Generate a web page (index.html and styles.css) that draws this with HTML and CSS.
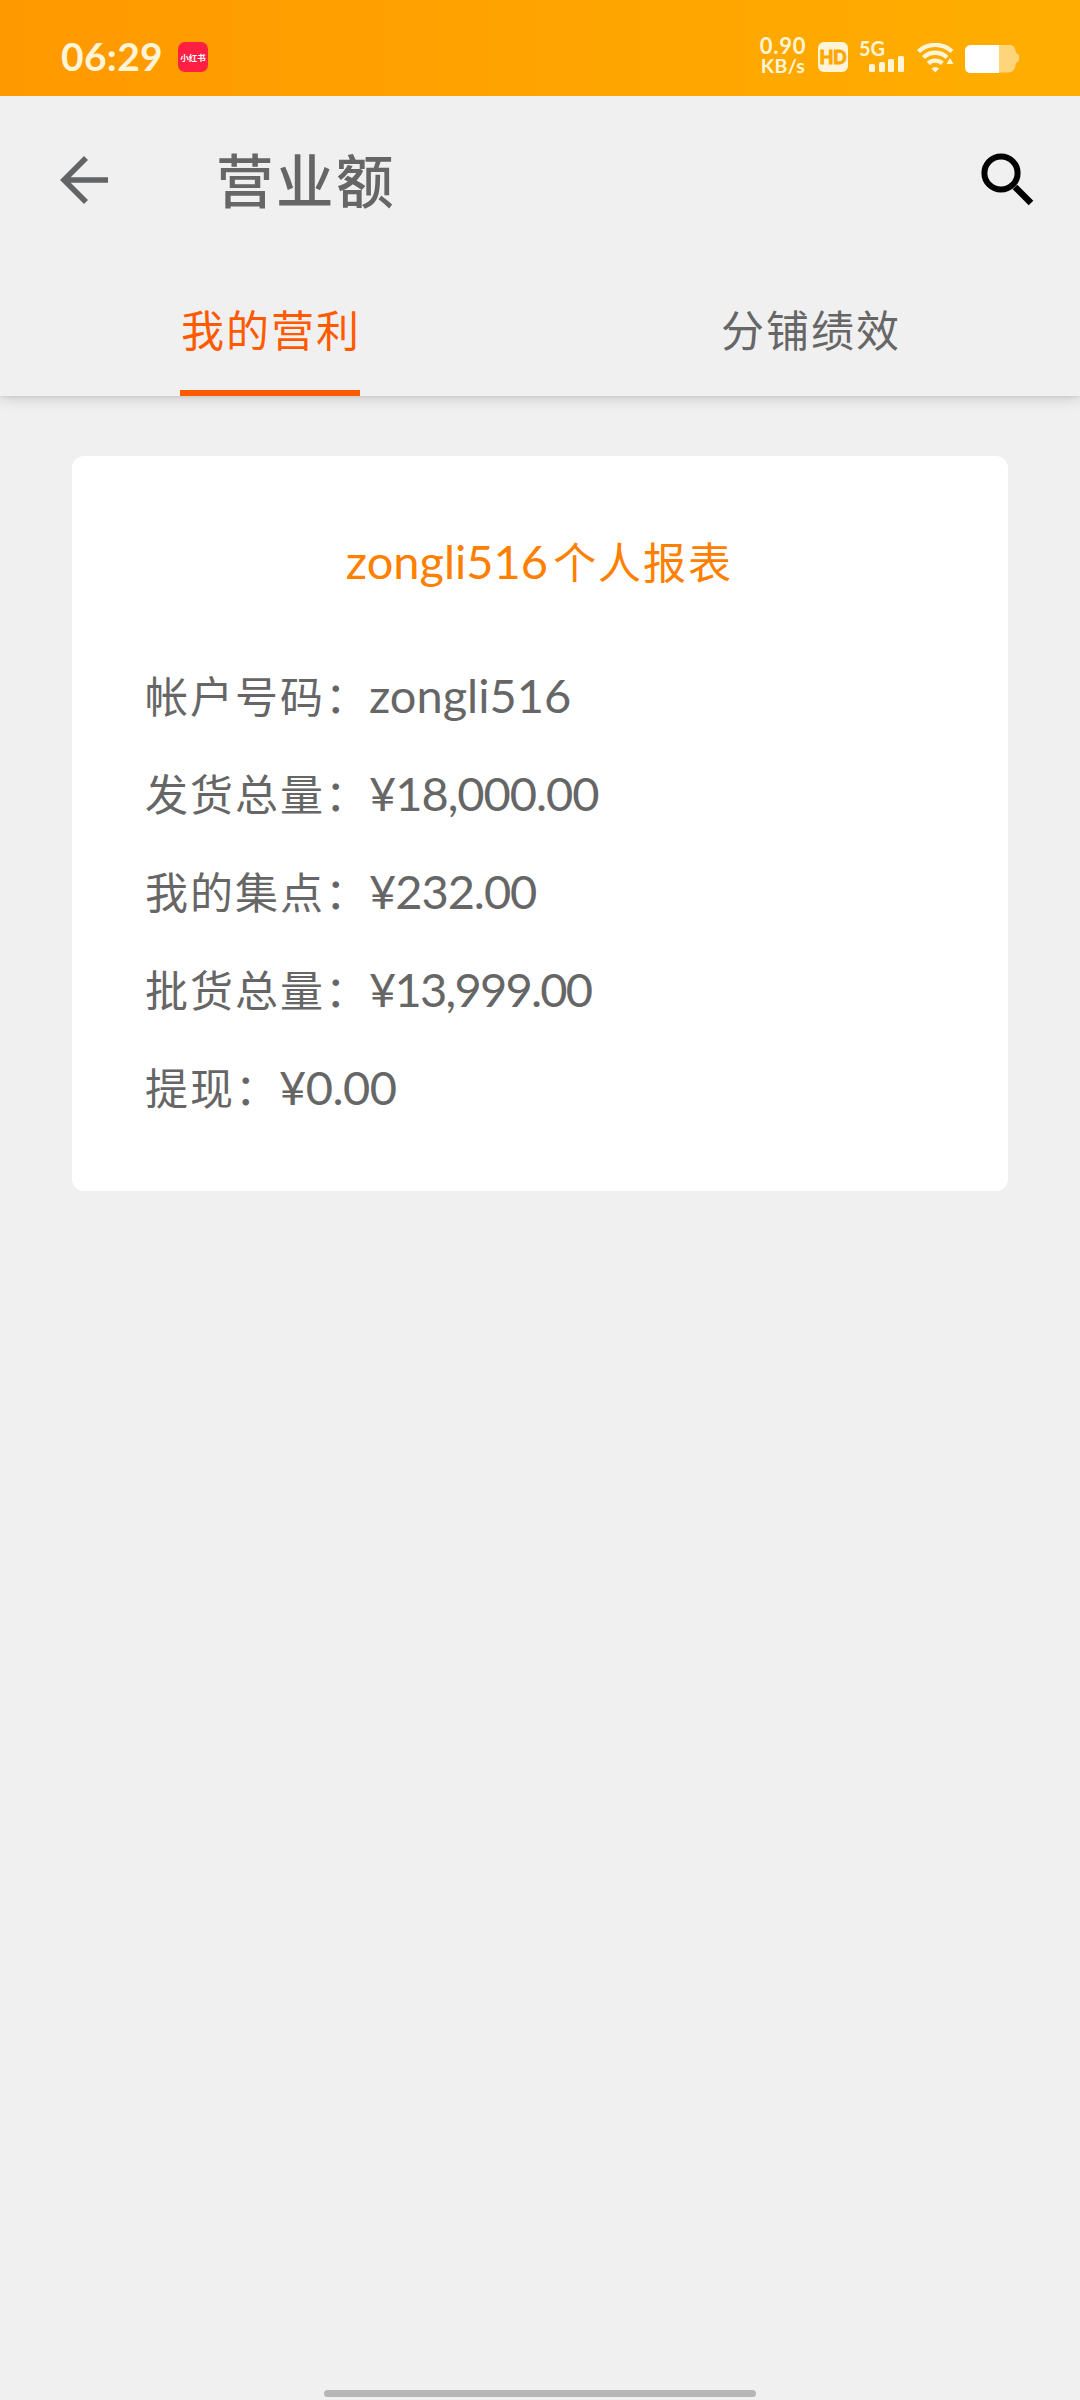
FILE: index.html
```html
<!DOCTYPE html>
<html lang="zh-CN">
<head>
<meta charset="utf-8">
<title>营业额</title>
<link rel="stylesheet" href="styles.css">
</head>
<body>
<header class="status">
  <span class="clock">06:29</span>
  <span class="app-badge">小红书</span>
  <div class="status-right">
    <div class="speed"><span class="speed-value">0.90</span><span class="speed-unit">KB/s</span></div>
    <span class="hd">HD</span>
    <div class="signal">
      <span class="network">5G</span>
      <svg class="bars" width="35" height="16" viewBox="0 0 35 16"><rect x="0" y="8" width="6" height="8" rx="1.5"/><rect x="10" y="6" width="6" height="10" rx="1.5"/><rect x="19" y="3" width="6" height="13" rx="1.5"/><rect x="29" y="0" width="6" height="16" rx="1.5"/></svg>
    </div>
    <svg class="wifi" width="37" height="30" viewBox="0 0 37 30" fill="none"><path d="M1.500 8.500a24.500 24.500 0 0 1 33.500 0M6.500 14.500a17 17 0 0 1 23.500 0" stroke="#fff5d6" stroke-width="4.400"/><path d="M11.300 20.300a10.500 10.500 0 0 1 14 0" stroke="#fff5d6" stroke-width="4.400"/><path d="M14.500 25.500q3.800-3 7.600 0l-3.800 4z" fill="#fff5d6"/><path d="M33 15l3.500 6h-7z" fill="#fff5d6"/></svg>
    <svg class="battery" width="54" height="28" viewBox="0 0 54 28"><path d="M34 0h11q5 0 6 8q3 1 3 3v4q0 2-3 3q-1 9-7 9.500H34z" fill="#ffd57c"/><path d="M34 0H6Q0 0 0 6v16q0 6 6 6h28z" fill="#fff"/></svg>
  </div>
</header>
<div class="appbar">
  <div class="toolbar">
    <svg class="back" width="48" height="48" viewBox="0 0 48 48" fill="none" stroke="#636466" stroke-width="5.600"><path d="M48 24H4M26 2L4 24l22 22"/></svg>
    <h1 class="title">营业额</h1>
    <svg class="search" width="54" height="54" viewBox="0 0 54 54" fill="none" stroke="#000"><circle cx="20" cy="20" r="16.600" stroke-width="6"/><path d="M34 34l16 16" stroke-width="6.500"/></svg>
  </div>
  <nav class="tabs">
    <div class="tab"><span class="tab-label tab-active">我的营利</span></div>
    <div class="tab"><span class="tab-label">分铺绩效</span></div>
  </nav>
</div>
<main class="content">
  <section class="card">
    <h2 class="report"><span class="value name">zongli516</span>个人报表</h2>
    <p class="row">帐户号码：<span class="value name">zongli516</span></p>
    <p class="row">发货总量：<span class="value snug">¥18,000.00</span></p>
    <p class="row">我的集点：<span class="value snug">¥232.00</span></p>
    <p class="row">批货总量：<span class="value tight">¥13,999.00</span></p>
    <p class="row">提现：<span class="value">¥0.00</span></p>
  </section>
</main>
<div class="home-bar"></div>
</body>
</html>
```
FILE: styles.css
```css
* { box-sizing: border-box; margin: 0; padding: 0; }
body {
  width: 1080px; height: 2400px;
  display: flex; flex-direction: column;
  background: #f0f0f0; color: #666;
  font-family: "Noto Sans CJK SC", sans-serif;
  overflow: hidden;
}
svg { display: block; flex: none; }
.status {
  height: 96px; flex: none;
  display: flex; align-items: flex-start;
  padding: 0 61px 0 61px;
  background: linear-gradient(90deg, #ff9900, #ffae00);
  color: #fff5d6;
  font-family: Lato, sans-serif; font-weight: 700;
}
.clock { width: 117px; margin-top: 32px; font-size: 39px; line-height: 48px; letter-spacing: .3px; white-space: nowrap; }
.app-badge {
  width: 30px; height: 30px; margin-top: 42px; border-radius: 7px;
  background: #ff1f43; color: #fff;
  font: 700 8.500px/30px "Noto Sans CJK SC", sans-serif;
  text-align: center; white-space: nowrap;
}
.status-right { display: flex; margin-left: auto; }
.speed { display: flex; flex-direction: column; align-items: center; width: 48px; margin-top: 35px; }
.speed-value { font-size: 22px; line-height: 22px; letter-spacing: .8px; }
.speed-unit { font-size: 19.500px; line-height: 20px; margin-top: -1px; letter-spacing: .3px; }
.hd { width: 30px; height: 30px; margin: 42px 0 0 11px; border-radius: 6px; background: #fff5d6; color: #ffa600; font-size: 18px; line-height: 30px; font-weight: 900; text-align: center; letter-spacing: -.3px; -webkit-text-stroke: .8px #ffa600; }
.signal { width: 45px; margin: 41px 0 0 11px; display: flex; flex-direction: column; }
.network { font-size: 20px; line-height: 15px; height: 15px; }
.bars { margin-left: 10px; fill: #fff5d6; }
.wifi { margin: 43px 0 0 13px; }
.battery { margin: 45px 0 0 11px; }
.appbar { height: 300px; flex: none; background: #f0f0f1; box-shadow: 0 2px 14px rgba(0,0,0,.16), 0 1px 3px rgba(0,0,0,.08); clip-path: inset(0 0 -24px 0); }
.toolbar { height: 168px; display: flex; align-items: center; padding: 0 45px 0 60px; }
.title { margin: -5px 0 0 108px; font-size: 57.500px; line-height: 84px; font-weight: 500; letter-spacing: 2.500px; flex: 1; }
.tabs { height: 132px; display: flex; }
.tab { flex: 1; display: flex; justify-content: center; }
.tab-label { width: 180px; height: 132px; font-size: 43px; line-height: 128px; letter-spacing: 2px; padding-left: 1px; white-space: nowrap; }
.tab-active { color: #ff5a00; border-bottom: 6px solid #ff5a00; }
.content { padding: 60px 72px; }
.card { height: 735px; padding: 55px 72px 0; border-radius: 12px; background: #fff; }
.report { height: 98px; margin-bottom: 36px; text-align: center; font-size: 43px; line-height: 98px; font-weight: 400; letter-spacing: 2px; color: #ff8000; white-space: nowrap; }
.row { height: 98px; padding-left: 1px; font-size: 43px; line-height: 98px; letter-spacing: 2px; white-space: nowrap; }
.value { margin-left: -1px; font-family: Lato, sans-serif; font-size: 47px; letter-spacing: -.5px; }
.name { letter-spacing: 0; }
.report .name { margin-right: 5px; }
.snug { letter-spacing: -1.050px; }
.tight { letter-spacing: -1.750px; }
.home-bar { width: 432px; height: 7px; margin: auto auto 3px; border-radius: 4px; background: #b6b6b6; flex: none; }
```
